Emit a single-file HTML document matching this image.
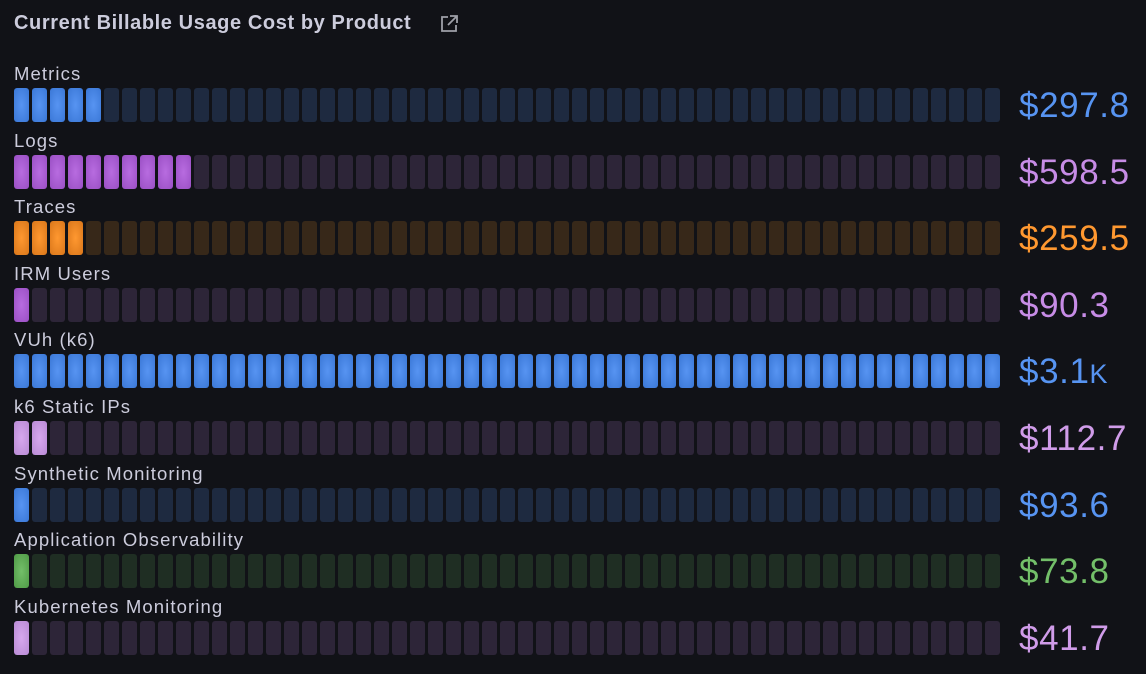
<!DOCTYPE html>
<html><head><meta charset="utf-8"><style>
body{margin:0;width:1146px;height:674px;background:#111217;font-family:"Liberation Sans",sans-serif;overflow:hidden;position:relative}
.t{position:absolute;left:14px;top:12px;font-size:20px;font-weight:bold;color:#ccccdc;letter-spacing:0.6px}
.ic{position:absolute;left:439px;top:14px}
.lab{position:absolute;left:14px;font-size:18.5px;color:#ccccdc;letter-spacing:1.1px}
.bar{position:absolute;left:14px;width:986px;height:34px;display:flex;gap:3px}
.bar div{flex:1;border-radius:3px}
.v{position:absolute;left:1019px;font-size:35px;line-height:34px;letter-spacing:0.6px}
</style></head><body>
<div class="t">Current Billable Usage Cost by Product</div>
<svg class="ic" width="20" height="20" viewBox="0 0 20 20" fill="none" stroke="#9fa0a8" stroke-width="1.8"><path d="M9 3H3v14h14v-6"/><path d="M11 2h7v7M18 2L9 11"/></svg>
<div id="c"></div>
<script>
var rows=[["Metrics",5,"#5794f2","#3a77d6","#1e2a40","$297.8","#5794f2"],
["Logs",10,"#b86ce0","#9a4fc4","#2d2538","$598.5","#c78ce6"],
["Traces",4,"#ff9830","#d9761a","#372819","$259.5","#ff9830"],
["IRM Users",1,"#b86ce0","#9a4fc4","#2d2538","$90.3","#c78ce6"],
["VUh (k6)",55,"#5794f2","#3a77d6","#1e2a40","$3.1K","#5794f2"],
["k6 Static IPs",2,"#d7a8ee","#b88ad4","#2d2538","$112.7","#d09ce9"],
["Synthetic Monitoring",1,"#5794f2","#3a77d6","#1e2a40","$93.6","#5794f2"],
["Application Observability",1,"#73bf69","#4f9a46","#1f2e23","$73.8","#73bf69"],
["Kubernetes Monitoring",1,"#d7a8ee","#b88ad4","#2d2538","$41.7","#d09ce9"]];
var h="";
rows.forEach(function(r,i){var y=88+i*66.6;
h+='<div class="lab" style="top:'+(y-25)+'px">'+r[0]+'</div><div class="bar" style="top:'+y+'px">';
for(var k=0;k<55;k++){h+= k<r[1]?'<div style="background:radial-gradient(ellipse at center,'+r[2]+','+r[3]+')"></div>':'<div style="background:'+r[4]+'"></div>';}
var val=r[5]=="$3.1K"?'$3.1<span style="font-size:27px">K</span>':r[5];
h+='</div><div class="v" style="top:'+(y+1)+'px;color:'+r[6]+'">'+val+'</div>';});
document.getElementById("c").innerHTML=h;
</script>
</body></html>
